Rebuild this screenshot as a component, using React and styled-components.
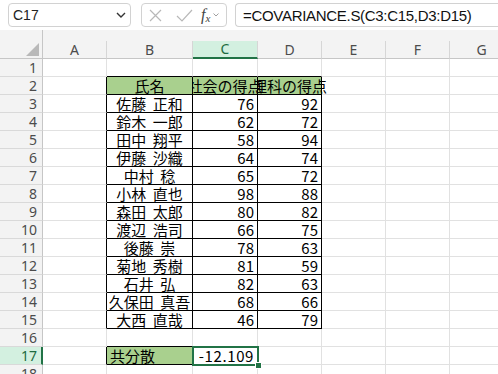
import React from "react";
import styled, { createGlobalStyle, css } from "styled-components";

const GRID = "#e1e1e1";
const BLACK = "#000";
const HEAD_GREEN = "#a9d08e";
const SEL = "#217346";
const SEL_BG = "#d3f0e0";

const GlobalStyle = createGlobalStyle`
  html, body {
    margin: 0;
    padding: 0;
    background: #fff;
    overflow: hidden;
  }
  body {
    font-family: "Noto Sans CJK JP", "Noto Sans", sans-serif;
  }
`;

const Window = styled.div`
  width: 498px;
  height: 374px;
  overflow: hidden;
  background: #fff;
`;

const Toolbar = styled.div`
  display: flex;
  align-items: center;
  height: 30px;
  padding-left: 8px;
  background: #fff;
  box-sizing: border-box;
`;

const Box = styled.div`
  flex: none;
  display: flex;
  align-items: center;
  height: 24px;
  box-sizing: border-box;
  border: 1px solid #d2d2d2;
  border-radius: 4px;
  background: #fff;
`;

const NameBox = styled(Box)`
  width: 123px;
  justify-content: space-between;
  padding: 0 4px 0 4px;
  margin-right: 10px;
  font: 14px "Liberation Sans", Arial, sans-serif;
  color: #222;
`;

const ActionBox = styled(Box)`
  width: 86px;
  padding-left: 7px;
  margin-right: 8px;
`;

const Fx = styled.span`
  font: italic 16px "Liberation Serif", serif;
  color: #444;
  margin-left: 8px;
  margin-right: 3px;
  line-height: 1;
  sub {
    font-size: 11px;
    vertical-align: -2px;
  }
`;

const FormulaBox = styled(Box)`
  flex: 1;
  min-width: 280px;
  border-right: none;
  border-radius: 4px 0 0 4px;
  padding-left: 7px;
  font: 15px "Liberation Sans", Arial, sans-serif;
  letter-spacing: -0.3px;
  color: #111;
  white-space: nowrap;
`;

const HeaderBand = styled.div`
  display: flex;
  align-items: flex-end;
  height: 29px;
  background: #f3f3f3;
`;

const Corner = styled.div`
  flex: none;
  box-sizing: border-box;
  width: 43px;
  height: 29px;
  border-right: 1px solid #c6c6c6;
  border-bottom: 1px solid #c6c6c6;
  display: flex;
  align-items: flex-end;
  justify-content: flex-end;
  padding: 0 3px 2px 0;
`;

const ColHead = styled.div`
  flex: none;
  box-sizing: border-box;
  width: ${(p) => p.$w}px;
  height: 18px;
  display: flex;
  align-items: center;
  justify-content: center;
  font: 14px/1 "Noto Sans", "Liberation Sans", sans-serif;
  color: ${(p) => (p.$active ? "#1d6b40" : "#4c4c4c")};
  background: ${(p) => (p.$active ? SEL_BG : "#f3f3f3")};
  border-right: 1px solid #d6d6d6;
  border-bottom: ${(p) => (p.$active ? `2px solid ${SEL}` : "1px solid #c6c6c6")};
`;

const Row = styled.div`
  display: flex;
  height: 18px;
`;

const RowHead = styled.div`
  flex: none;
  box-sizing: border-box;
  width: 43px;
  height: 18px;
  display: flex;
  align-items: center;
  justify-content: flex-end;
  padding-right: ${(p) => (p.$active ? 4 : 5)}px;
  font: 14px/1 "Noto Sans", "Liberation Sans", sans-serif;
  color: ${(p) => (p.$active ? "#1d6b40" : "#4c4c4c")};
  background: ${(p) => (p.$active ? SEL_BG : "#f3f3f3")};
  border-right: ${(p) => (p.$active ? `2px solid ${SEL}` : "1px solid #c6c6c6")};
  border-bottom: 1px solid #d9d9d9;
`;

const Cell = styled.div`
  flex: none;
  box-sizing: border-box;
  width: ${(p) => p.$w}px;
  height: 18px;
  display: flex;
  align-items: center;
  justify-content: ${(p) =>
    p.$align === "right" ? "flex-end" : p.$align === "left" ? "flex-start" : "center"};
  padding: 0 3px;
  border-right: 1px solid ${(p) => p.$rb || GRID};
  border-bottom: 1px solid ${(p) => p.$bb || GRID};
  background: ${(p) => p.$bg || "transparent"};
  white-space: nowrap;
  font-size: 15px;
  line-height: 1;
  color: #000;
  word-spacing: 3px;
  ${(p) =>
    p.$clipLeft &&
    css`
      clip-path: inset(0 -40px 0 0);
    `}
  ${(p) =>
    p.$selected &&
    css`
      position: relative;
      letter-spacing: 0.6px;
    `}
`;

const Selection = styled.span`
  position: absolute;
  left: -1px;
  top: -1px;
  right: -2px;
  bottom: -2px;
  border: 2px solid ${SEL};
  z-index: 2;
`;

const Handle = styled.span`
  position: absolute;
  right: -5px;
  bottom: -5px;
  width: 5px;
  height: 5px;
  background: ${SEL};
  border: 1px solid #fff;
  z-index: 3;
`;

const COLS = [
  { key: "A", w: 64 },
  { key: "B", w: 86 },
  { key: "C", w: 65 },
  { key: "D", w: 64 },
  { key: "E", w: 64 },
  { key: "F", w: 64 },
  { key: "G", w: 64 },
];

const DATA = [
  ["佐藤 正和", 76, 92],
  ["鈴木 一郎", 62, 72],
  ["田中 翔平", 58, 94],
  ["伊藤 沙織", 64, 74],
  ["中村 稔", 65, 72],
  ["小林 直也", 98, 88],
  ["森田 太郎", 80, 82],
  ["渡辺 浩司", 66, 75],
  ["後藤 崇", 78, 63],
  ["菊地 秀樹", 81, 59],
  ["石井 弘", 82, 63],
  ["久保田 真吾", 68, 66],
  ["大西 直哉", 46, 79],
];

// what one cell shows and how its borders look
function cellFor(r, c) {
  const inTable = r >= 2 && r <= 15;
  const tableCol = c === "B" || c === "C" || c === "D";
  const cell = {};

  if (r === 1 && tableCol) cell.bb = BLACK;
  if (inTable && c === "A") cell.rb = BLACK;
  if (inTable && tableCol) {
    cell.rb = BLACK;
    cell.bb = BLACK;
  }
  if (r === 2 && tableCol) {
    cell.bg = HEAD_GREEN;
    cell.text = c === "B" ? "氏名" : c === "C" ? "社会の得点" : "理科の得点";
    if (c === "C") cell.clipLeft = true;
  }
  if (r >= 3 && r <= 15 && tableCol) {
    const d = DATA[r - 3];
    if (c === "B") cell.text = d[0];
    if (c === "C") cell.text = d[1];
    if (c === "D") cell.text = d[2];
    cell.align = c === "B" ? "center" : "right";
  }
  if (r === 16 && c === "B") cell.bb = BLACK;
  if (r === 17) {
    if (c === "A") cell.rb = BLACK;
    if (c === "B") {
      cell.bg = HEAD_GREEN;
      cell.bb = BLACK;
      cell.text = "共分散";
      cell.align = "left";
    }
    if (c === "C") {
      cell.text = "-12.109";
      cell.align = "right";
      cell.selected = true;
    }
  }
  return cell;
}

const ROWS = Array.from({ length: 18 }, (_, i) => i + 1);

export default function App() {
  return (
    <Window>
      <GlobalStyle />
      <Toolbar>
        <NameBox>
          <span>C17</span>
          <svg width="10" height="6" viewBox="0 0 10 6">
            <path d="M1 1 L5 5 L9 1" stroke="#333" strokeWidth="1.4" fill="none" />
          </svg>
        </NameBox>
        <ActionBox>
          <svg width="13" height="13" viewBox="0 0 13 13">
            <path d="M1 1 L12 12 M12 1 L1 12" stroke="#b8b8b8" strokeWidth="1.2" fill="none" />
          </svg>
          <svg width="17" height="13" viewBox="0 0 17 13" style={{ marginLeft: 14 }}>
            <path d="M1 7 L6 12 L16 1" stroke="#b8b8b8" strokeWidth="1.2" fill="none" />
          </svg>
          <Fx>
            f<sub>x</sub>
          </Fx>
          <svg width="6" height="4" viewBox="0 0 6 4">
            <path d="M0.5 0.5 L3 3 L5.5 0.5" stroke="#a0a0a0" strokeWidth="1" fill="none" />
          </svg>
        </ActionBox>
        <FormulaBox>=COVARIANCE.S(C3:C15,D3:D15)</FormulaBox>
      </Toolbar>

      <HeaderBand>
        <Corner>
          <svg width="13" height="13" viewBox="0 0 13 13">
            <polygon points="13,0 13,13 0,13" fill="#b9b9b9" />
          </svg>
        </Corner>
        {COLS.map((col) => (
          <ColHead key={col.key} $w={col.w} $active={col.key === "C"}>
            {col.key}
          </ColHead>
        ))}
      </HeaderBand>

      {ROWS.map((r) => (
        <Row key={r}>
          <RowHead $active={r === 17}>{r}</RowHead>
          {COLS.map((col) => {
            const cell = cellFor(r, col.key);
            return (
              <Cell
                key={col.key}
                $w={col.w}
                $align={cell.align}
                $rb={cell.rb}
                $bb={cell.bb}
                $bg={cell.bg}
                $clipLeft={cell.clipLeft}
                $selected={cell.selected}
              >
                {cell.text}
                {cell.selected && (
                  <>
                    <Selection />
                    <Handle />
                  </>
                )}
              </Cell>
            );
          })}
        </Row>
      ))}
    </Window>
  );
}
